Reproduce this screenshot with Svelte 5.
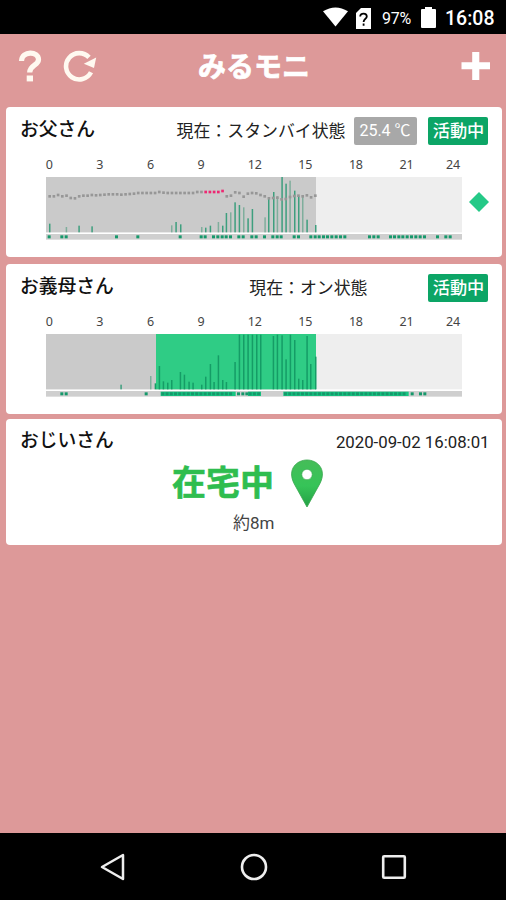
<script>
  // Chart units are thirds of a pixel, measured from the left edge of the screen.
  const hours = [0, 3, 6, 9, 12, 15, 18, 21, 24];
  const BASE = 398;

  const fatherBars = [
    [149, 372], [199, 382], [237, 378], [276, 380], [515, 377], [528, 367], [542, 374],
    [605, 382], [617, 384], [631, 378], [655, 367], [668, 378], [679, 340], [692, 338],
    [705, 308], [718, 316], [731, 323], [744, 356], [757, 328], [795, 353], [806, 298],
    [821, 277], [832, 290], [846, 232], [858, 252], [870, 243], [884, 273], [896, 289],
    [908, 290], [921, 360], [947, 376]
  ];
  const fatherTemps = [
    290, 290, 286, 290, 288, 295, 296, 290, 288, 288, 286, 287, 286, 285, 284, 284, 284, 285, 284,
    283, 282, 280, 280, 280, 280, 280, 277, 279, 280, 280, 280, 280, 280, 280, 280, 277, 277,
    277, 277, 277, 277, 274, 290, 288, 278, 280, 291, 282, 280, 281, 286, 290, 296, 295, 294,
    299, 298, 292, 289, 288, 290, 287, 293, 288
  ];
  const fatherMarks = [
    147, 185, 198, 349, 413, 540, 603, 615, 640, 653, 666, 678, 691, 716, 729, 755, 768, 793,
    818, 831, 843, 882, 895, 932, 945, 957, 970, 982, 995, 1008, 1021, 1034, 1108, 1121, 1134,
    1171, 1183, 1196, 1208, 1221, 1234, 1247, 1260, 1273, 1312, 1337, 1350
  ];
  const motherBars = [
    [363, 384], [452, 358], [466, 380], [478, 328], [490, 374], [503, 378], [515, 370],
    [541, 346], [553, 354], [567, 375], [579, 378], [605, 384], [617, 360], [631, 322],
    [642, 376], [655, 296], [668, 370], [679, 376], [705, 316], [718, 234], [731, 234],
    [744, 234], [757, 234], [770, 234], [782, 234], [820, 238], [832, 234], [846, 236],
    [858, 308], [871, 234], [884, 250], [896, 366], [908, 370], [921, 238], [932, 322], [947, 300]
  ];
  const solid = [[482, 225], [744, 39], [850, 376]];
  const motherMarks = [185, 198, 438, 715, 728, 740, 1236, 1261, 1274];
  for (const [x, w] of solid) {
    for (let p = x + 6; p < x + w - 4; p += 12.7) motherMarks.push(p);
  }

  const people = [
    { name: 'お父さん', status: '現在：スタンバイ状態', temp: '25.4 ℃', bars: fatherBars, temps: fatherTemps, marks: fatherMarks, solid: [], on: false },
    { name: 'お義母さん', status: '現在：オン状態', temp: '', bars: motherBars, temps: [], marks: motherMarks, solid, on: true }
  ];
</script>

<div class="screen">
  <div class="status-bar">
    <svg class="wifi" width="25" height="20" viewBox="0 0 26 20"><path d="M0 4 Q13-4 26 4L13 20Z" fill="#fff" /></svg>
    <svg class="sim" width="15" height="21" viewBox="0 0 15 21">
      <path d="M5 0H15V21H0V5Z" fill="#fff" />
      <path d="M4.2 8.5C4.2 4.6 10.8 4.7 10.8 8.5C10.8 10.8 7.6 10.8 7.6 14M7.6 15.6V17.8" fill="none" stroke="#000" stroke-width="1.8" />
    </svg>
    <span class="percent">97%</span>
    <svg class="battery" width="15" height="21" viewBox="0 0 15 21"><path d="M4 0H11V2H14Q15 2 15 3V20Q15 21 14 21H1Q0 21 0 20V3Q0 2 1 2H4Z" fill="#fff" /></svg>
    <span class="clock">16:08</span>
  </div>

  <header>
    <svg class="help" width="24" height="32" viewBox="0 0 24 32">
      <path d="M3.5 11C4 .5 20.5 1 20.5 9.5C20.5 15.5 11.7 15 11.7 22.5" fill="none" stroke="#fff9f0" stroke-width="5.2" />
      <rect x="8.7" y="25.5" width="6.3" height="5.9" fill="#fff9f0" />
    </svg>
    <svg class="reload" width="34" height="32" viewBox="0 0 34 32">
      <path d="M28 22.3A13.2 13.2 0 1 1 26 7.4" fill="none" stroke="#fff9f0" stroke-width="4.6" />
      <path d="M33.2 7.5L31 18L20.8 13.8Z" fill="#fff9f0" />
    </svg>
    <h1>みるモニ</h1>
    <svg class="add" width="30" height="30" viewBox="0 0 30 30"><path d="M11.2 1H18.3V11.3H29V18.2H18.3V29H11.2V18.2H.5V11.3H11.2Z" fill="#fff" /></svg>
  </header>

  <main>
    {#each people as person}
      <section class="card monitor">
        <div class="head">
          <h2>{person.name}</h2>
          <span class="state" class:centered={person.on}>{person.status}</span>
          {#if person.temp}<span class="badge temp">{person.temp}</span>{/if}
          <span class="badge active">活動中</span>
        </div>
        <div class="hours">
          {#each hours as hour}<span>{hour}</span>{/each}
        </div>
        <div class="plot">
          <svg width="416" height="63" viewBox="138 232 1248 189">
            <rect x="138" y="232" width="1248" height="166" fill="#eee" />
            <rect x="138" y="232" width="810" height="166" fill="#cacaca" />
            {#if person.on}<rect x="468" y="232" width="480" height="166" fill="#2fcc85" />{/if}
            {#each person.bars as [x, y], i}
              <rect x={x - 2} {y} width="4.5" height={BASE - y} fill={person.on && x > 460 ? '#159c66' : i % 3 === 1 ? '#7fae9c' : '#3e9f7e'} />
            {/each}
            {#each person.temps as y, i}
              <rect x={145 + i * 12.65} y={y - 4} width="8" height="8" fill={i > 36 && i < 42 ? '#ed2872' : '#979797'} />
            {/each}
            <rect x="138" y="403" width="1248" height="17" fill="#cfcfcf" />
            {#each person.solid as [x, w]}<rect {x} y="405" width={w} height="13" fill="#16c582" />{/each}
            {#each person.marks as x}<rect x={x - 4} y="407" width="9" height="9" fill="#16986b" />{/each}
          </svg>
          {#if !person.on}<svg class="diamond" width="20" height="20" viewBox="0 0 20 20"><path d="M10 0L20 10L10 20L0 10Z" fill="#25c987" /></svg>{/if}
        </div>
      </section>
    {/each}

    <section class="card location">
      <div class="head">
        <h2>おじいさん</h2>
        <time>2020-09-02 16:08:01</time>
      </div>
      <div class="presence">
        <strong>在宅中</strong>
        <svg width="32" height="49" viewBox="0 0 32 49">
          <defs><linearGradient id="pin" x2="0" y2="1"><stop stop-color="#45bd58" /><stop offset=".55" stop-color="#36c458" /><stop offset="1" stop-color="#23a044" /></linearGradient></defs>
          <path d="M16 48L3.3 25C-4.5 10 6 1 16 1S36.5 10 28.7 25Z" fill="url(#pin)" stroke="#37a64c" stroke-width=".8" />
          <circle cx="16" cy="15.5" r="5.2" fill="#fff" stroke="#36a64c" stroke-width=".6" />
        </svg>
      </div>
      <p>約8m</p>
    </section>
  </main>

  <nav>
    <svg width="26" height="30" viewBox="0 0 26 30"><path d="M23 3V27L2 15Z" fill="none" stroke="#eee" stroke-width="2.5" stroke-linejoin="round" /></svg>
    <svg width="28" height="28" viewBox="0 0 28 28"><circle cx="14" cy="14" r="12" fill="none" stroke="#eee" stroke-width="2.6" /></svg>
    <svg width="26" height="26" viewBox="0 0 26 26"><rect x="2.2" y="2.2" width="21.6" height="21.6" rx="1" fill="none" stroke="#eee" stroke-width="2.6" /></svg>
  </nav>
</div>

<style>
  .screen {
    width: 506px;
    height: 900px;
    display: flex;
    flex-direction: column;
    overflow: hidden;
    background: #dd9999;
    font-family: Roboto, "Noto Sans CJK JP", sans-serif;
    color: #222;
  }
  svg { display: block; flex: none; }
  h1, h2, p { margin: 0; }
  span, h1, h2, strong, time { white-space: nowrap; }
  .status-bar {
    height: 34px;
    flex: none;
    display: flex;
    align-items: center;
    box-sizing: border-box;
    padding: 2px 11px 0 0;
    justify-content: flex-end;
    background: #000;
    color: #fff;
  }
  .wifi { margin-top: -3px; }
  .sim { margin-left: 8px; }
  .percent { margin-left: 11px; width: 31px; font-size: 16px; letter-spacing: -0.3px; }
  .battery { margin-left: 8px; margin-top: -2px; }
  .clock { margin-left: 9px; width: 50px; font-size: 19.5px; font-weight: 500; }
  header {
    height: 73px;
    flex: none;
    display: flex;
    align-items: center;
    box-sizing: border-box;
    padding: 0 15px 9px 18px;
  }
  .reload { margin-left: 21px; }
  h1 {
    width: 116px;
    margin-left: 101px;
    margin-top: 3px;
    font-size: 28px;
    line-height: 40px;
    font-weight: 700;
    color: #fff;
    -webkit-text-stroke: 0.7px #fff;
  }
  .add { margin-left: auto; }
  main { flex: 1; padding: 0 4.5px 0 6px; }
  .card { box-sizing: border-box; border-radius: 4px; background: #fff; }
  .monitor { height: 150px; margin-bottom: 7px; }
  .monitor + .location { margin-top: -2px; }
  .location { height: 126px; }
  .head {
    height: 48px;
    display: flex;
    align-items: center;
    box-sizing: border-box;
    padding: 0 14px 0 14px;
  }
  h2 { flex: 1; font-size: 18.8px; line-height: 28px; font-weight: 500; color: #111; margin-top: -2px; }
  .state { font-size: 16.9px; margin-right: 8px; margin-top: -3px; }
  .state.centered { margin-right: 60px; }
  .badge {
    height: 28px;
    line-height: 28px;
    border-radius: 2px;
    text-align: center;
    color: #fff;
  }
  .temp { width: 63px; margin-right: 11px; background: #a8a8a8; font-size: 16px; }
  .active { width: 60px; line-height: 29px; text-indent: 2px; background: #0ca566; font-size: 17.2px; font-weight: 500; }
  .hours {
    height: 22px;
    display: flex;
    padding-left: 18px;
    font: 12.5px/20px "Noto Sans", sans-serif;
    color: #444;
  }
  .hours span { width: 50.6px; text-align: center; }
  .hours span:nth-child(5) { padding-left: 3px; }
  .hours span:nth-child(9) { margin-left: -4px; }
  .hours span:nth-child(n + 5) { letter-spacing: -0.2px; }
  .plot { display: flex; padding-left: 40px; }
  .diamond { margin: 15px 0 0 7px; }
  time { font-size: 16.8px; }
  .location .head { height: 40px; padding-top: 6px; padding-right: 12px; }
  .presence { display: flex; align-items: center; height: 49px; padding-left: 166px; }
  strong { font-size: 34px; line-height: 49px; width: 119px; color: #2fbd4f; -webkit-text-stroke: 0.6px #2fbd4f; }
  p { text-align: center; font-size: 17px; line-height: 25px; color: #444; padding-top: 3px; }
  nav {
    height: 67px;
    flex: none;
    display: flex;
    align-items: center;
    justify-content: space-between;
    box-sizing: border-box;
    padding: 0 99px 0 100px;
    background: #000;
  }
</style>
